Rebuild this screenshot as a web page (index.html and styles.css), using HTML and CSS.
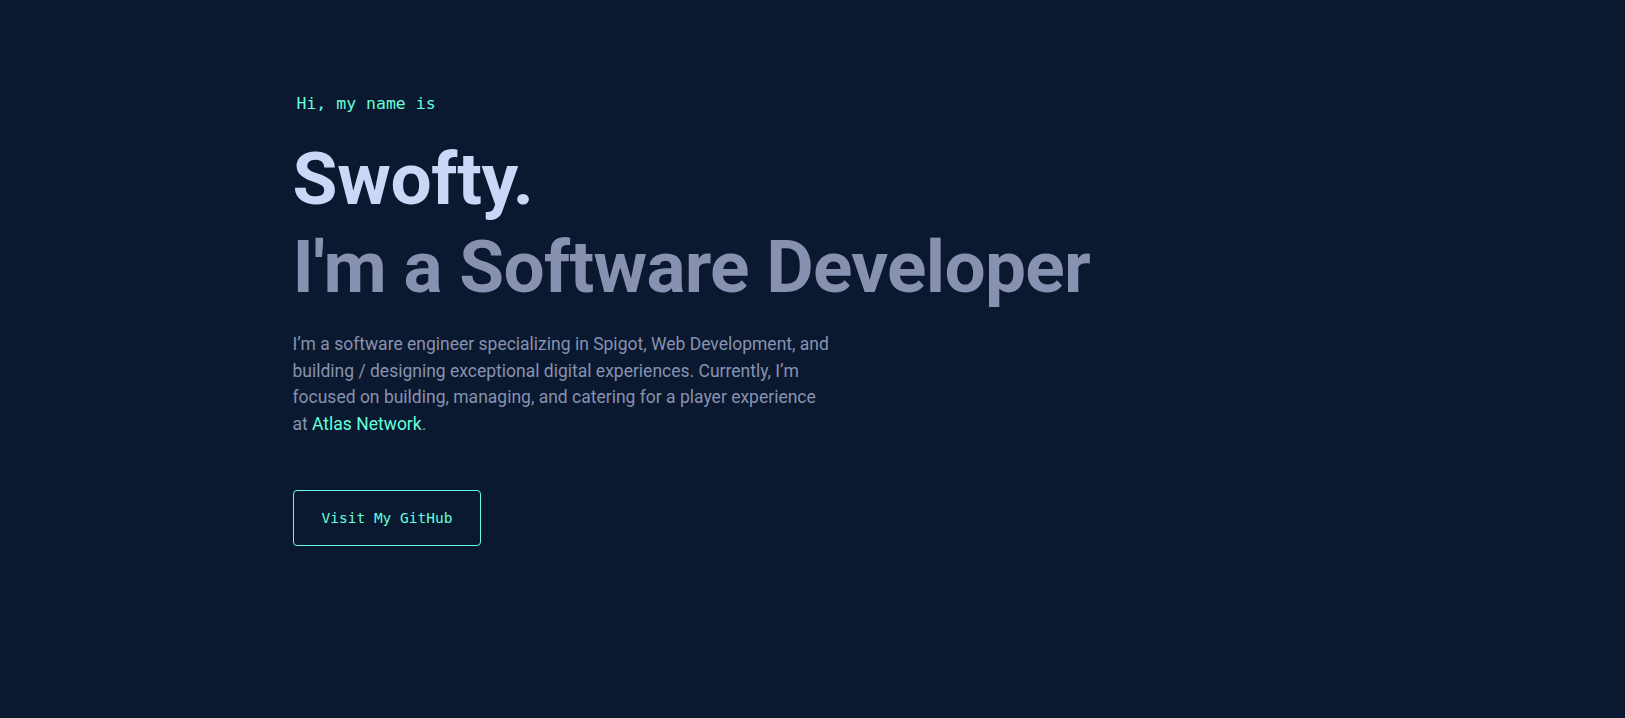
FILE: index.html
```html
<!DOCTYPE html>
<html lang="en">
<head>
<meta charset="utf-8">
<title>Swofty</title>
<link rel="stylesheet" href="styles.css">
</head>
<body>
<main class="page">
  <section class="hero">
    <p class="intro">Hi, my name is</p>
    <h1 class="name">Swofty.</h1>
    <h2 class="role">I'm a Software Developer</h2>
    <p class="about">I’m a software engineer specializing in Spigot, Web Development, and building / designing exceptional digital experiences. Currently, I’m focused on building, managing, and catering for a player experience at <a class="link" href="#">Atlas Network</a>.</p>
    <a class="button" href="#">Visit My GitHub</a>
  </section>
</main>
</body>
</html>
```
FILE: styles.css
```css
html, body {
  margin: 0;
  padding: 0;
  background: #0a192f;
}
body {
  font-family: Roboto, "Liberation Sans", sans-serif;
  color: #8892b0;
  min-height: 718px;
}
.page {
  width: 1040px;
  margin: 0 auto;
}
.hero {
  padding-top: 95px;
  display: flex;
  flex-direction: column;
  align-items: flex-start;
}
.intro {
  margin: 0 0 23px 4px;
  font-family: "DejaVu Sans Mono", "Liberation Mono", monospace;
  font-size: 16.5px;
  line-height: 1.1;
  color: #64ffda;
}
.name {
  margin: 0;
  font-size: 73px;
  font-weight: 700;
  line-height: 1.2;
  letter-spacing: -0.3px;
  color: #ccd6f6;
}
.role {
  margin: 0;
  font-size: 73px;
  font-weight: 700;
  line-height: 1.2;
  letter-spacing: -0.7px;
  color: #8892b0;
}
.about {
  margin: 20px 0 0;
  max-width: 540px;
  font-size: 17.5px;
  line-height: 26.4px;
  color: #8892b0;
}
.link {
  color: #64ffda;
  text-decoration: none;
}
.button {
  margin-top: 53px;
  padding: 0 28px;
  height: 56px;
  box-sizing: border-box;
  display: inline-flex;
  align-items: center;
  border: 1px solid #64ffda;
  border-radius: 4px;
  font-family: "DejaVu Sans Mono", "Liberation Mono", monospace;
  font-size: 14.5px;
  font-weight: 500;
  color: #64ffda;
  text-decoration: none;
}
```
